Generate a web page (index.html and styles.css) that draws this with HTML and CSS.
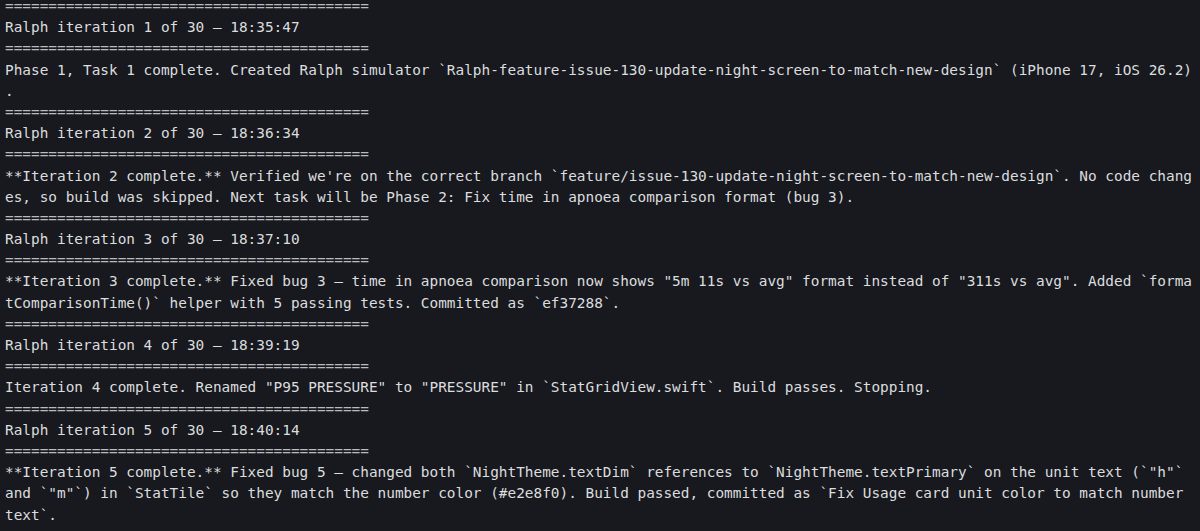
FILE: index.html
```html
<!DOCTYPE html>
<html>
<head>
<meta charset="utf-8">
<link rel="stylesheet" href="styles.css">
</head>
<body>
<div class="term">
<div class="row rule first">==========================================</div>
<div class="row">Ralph iteration 1 of 30 – 18:35:47</div>
<div class="row rule">==========================================</div>
<div class="row">Phase 1, Task 1 complete. Created Ralph simulator `Ralph-feature-issue-130-update-night-screen-to-match-new-design` (iPhone 17, iOS 26.2)</div>
<div class="row">.</div>
<div class="row rule">==========================================</div>
<div class="row">Ralph iteration 2 of 30 – 18:36:34</div>
<div class="row rule">==========================================</div>
<div class="row">**Iteration 2 complete.** Verified we're on the correct branch `feature/issue-130-update-night-screen-to-match-new-design`. No code chang</div>
<div class="row">es, so build was skipped. Next task will be Phase 2: Fix time in apnoea comparison format (bug 3).</div>
<div class="row rule">==========================================</div>
<div class="row">Ralph iteration 3 of 30 – 18:37:10</div>
<div class="row rule">==========================================</div>
<div class="row">**Iteration 3 complete.** Fixed bug 3 – time in apnoea comparison now shows "5m 11s vs avg" format instead of "311s vs avg". Added `forma</div>
<div class="row">tComparisonTime()` helper with 5 passing tests. Committed as `ef37288`.</div>
<div class="row rule">==========================================</div>
<div class="row">Ralph iteration 4 of 30 – 18:39:19</div>
<div class="row rule">==========================================</div>
<div class="row">Iteration 4 complete. Renamed "P95 PRESSURE" to "PRESSURE" in `StatGridView.swift`. Build passes. Stopping.</div>
<div class="row rule">==========================================</div>
<div class="row">Ralph iteration 5 of 30 – 18:40:14</div>
<div class="row rule">==========================================</div>
<div class="row">**Iteration 5 complete.** Fixed bug 5 – changed both `NightTheme.textDim` references to `NightTheme.textPrimary` on the unit text (`"h"`</div>
<div class="row">and `"m"`) in `StatTile` so they match the number color (#e2e8f0). Build passed, committed as `Fix Usage card unit color to match number</div>
<div class="row">text`.</div>
</div>
</body>
</html>
```

FILE: styles.css
```css
html, body {
  margin: 0;
  padding: 0;
  background: #17191e;
  height: 100%;
  overflow: hidden;
}

.term {
  padding: 0 5px;
  font-family: "DejaVu Sans Mono", "Liberation Mono", monospace;
  font-size: 14.4px;
  line-height: 21.2px;
  color: #dcdddf;
}

.row {
  white-space: pre;
  height: 21.2px;
}

.rule {
  color: #b9bbbf;
}

.first {
  height: 17.2px;
  line-height: 13px;
}
```
